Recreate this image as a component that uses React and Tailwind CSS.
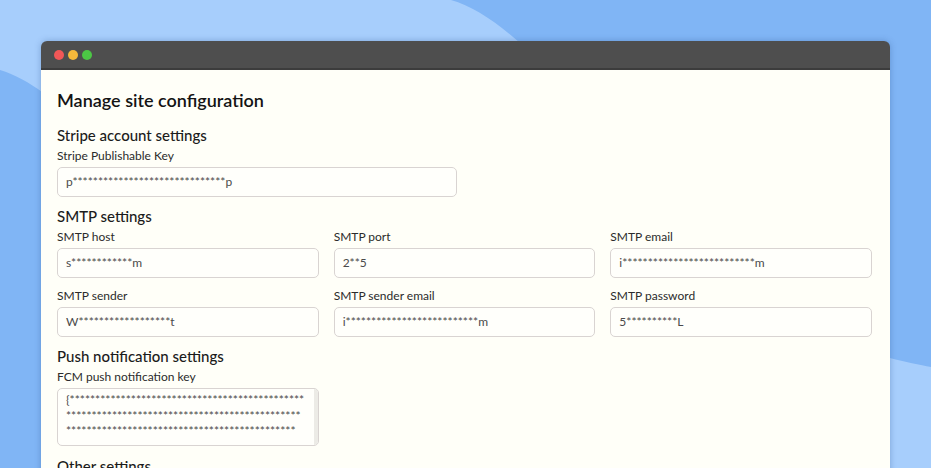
import React from "react";

const font = { fontFamily: "Lato, 'Noto Sans', sans-serif" };

function Field({ label, value }) {
  return (
    <div>
      <label className="block text-[12px] leading-4 text-[#2b2b2b] mb-[3px]">{label}</label>
      <div className="h-[30px] rounded-[5px] border border-[#d9d4d2] bg-[#fffffb] px-2 flex items-center text-[12px] text-[#4a4a4a]">
        {value}
      </div>
    </div>
  );
}

function Heading({ children }) {
  return <h2 className="text-[15px] leading-[22px] font-medium text-[#1c1c1c]">{children}</h2>;
}

const stars = (n) => "*".repeat(n);

export default function App() {
  const fcm = "{" + stars(137);

  return (
    <div className="relative h-[468px] w-[931px] overflow-hidden bg-[#80b5f5]" style={font}>
      {/* background waves */}
      <svg className="absolute inset-0" width="931" height="468" viewBox="0 0 931 468">
        <path
          d="M0,0 H451 C560,30 700,300 890,358 C905,362 920,365 931,367 V468 H300 C200,300 100,100 0,70 Z"
          fill="#a7cefc"
        />
      </svg>

      <div className="relative mx-[41px] mt-[41px] h-[500px] rounded-t-[6px] overflow-hidden shadow-[0_0_6px_rgba(40,80,140,0.35)]">
        {/* title bar */}
        <div className="h-[29px] bg-[#4e4e4e] border-b-2 border-[#3c3c3c] flex items-center gap-[4px] pl-[13px]">
          <span className="w-[10px] h-[10px] rounded-full bg-[#f25757]" />
          <span className="w-[10px] h-[10px] rounded-full bg-[#f6b93b]" />
          <span className="w-[10px] h-[10px] rounded-full bg-[#4cc745]" />
        </div>

        <div className="bg-[#fffff8] h-full pl-4 pr-[18px] pt-[18px]">
          <h1 className="text-[18px] leading-6 font-semibold text-[#141414] mb-[12px]">Manage site configuration</h1>

          <Heading>Stripe account settings</Heading>
          <div className="w-[400px] mt-[2px]">
            <Field label="Stripe Publishable Key" value={"p" + stars(30) + "p"} />
          </div>

          <div className="mt-[8px]">
            <Heading>SMTP settings</Heading>
          </div>
          <div className="grid grid-cols-3 gap-x-[15px] gap-y-[10px] mt-[2px]">
            <Field label="SMTP host" value={"s" + stars(12) + "m"} />
            <Field label="SMTP port" value="2**5" />
            <Field label="SMTP email" value={"i" + stars(26) + "m"} />
            <Field label="SMTP sender" value={"W" + stars(18) + "t"} />
            <Field label="SMTP sender email" value={"i" + stars(26) + "m"} />
            <Field label="SMTP password" value={"5" + stars(10) + "L"} />
          </div>

          <div className="mt-[8px]">
            <Heading>Push notification settings</Heading>
          </div>
          <div className="grid grid-cols-3 gap-x-[15px] mt-[2px]">
            <div>
              <label className="block text-[12px] leading-4 text-[#2b2b2b] mb-[3px]">FCM push notification key</label>
              <div className="relative h-[58px] rounded-[5px] border border-[#d9d4d2] bg-[#fffffb] overflow-hidden">
                <div className="pl-2 pr-3 pt-[3px] text-[12px] leading-[15.5px] text-[#4a4a4a] break-all">{fcm}</div>
                <div className="absolute right-0 top-0 bottom-0 w-[4px] bg-[#ecebe6]" />
              </div>
            </div>
          </div>

          <div className="mt-[9px]">
            <Heading>Other settings</Heading>
          </div>
        </div>
      </div>
    </div>
  );
}
